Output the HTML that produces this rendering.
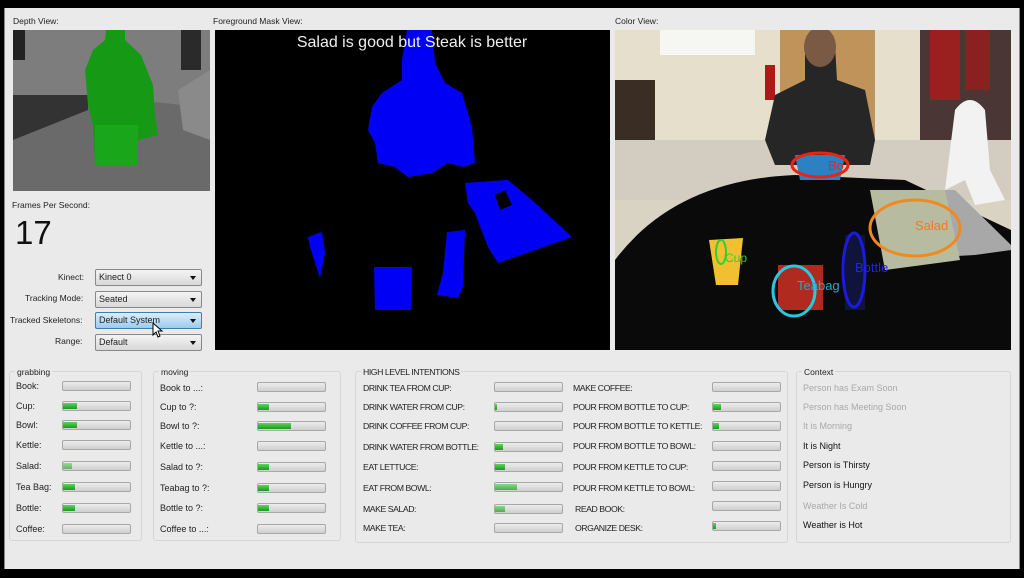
<!DOCTYPE html>
<html><head><meta charset="utf-8"><style>
*{margin:0;padding:0;box-sizing:border-box}
body{width:1024px;height:578px;background:#000;position:relative;overflow:hidden;font-family:"Liberation Sans",sans-serif;font-size:9px;color:#222}
.a{position:absolute}
.win{left:4px;top:8px;width:1016px;height:561px;background:#eaeaea;border-left:1px solid #888;border-right:1px solid #888}
.lbl{position:absolute;font-size:8.5px;color:#222;white-space:nowrap}
.cb{position:absolute;left:95px;width:107px;height:17px;border:1px solid #888;border-radius:2px;background:linear-gradient(#f4f4f4,#d8d8d8);font-size:9px;padding:2px 3px;color:#222}
.cb:after{content:"";position:absolute;right:5px;top:6px;border-left:3px solid transparent;border-right:3px solid transparent;border-top:4px solid #111}
.grp{position:absolute;border:1px solid #d6d6d6;border-radius:3px}
.gt{position:absolute;top:-5px;left:5px;background:#eaeaea;padding:0 2px;font-size:8.5px}
.bar{position:absolute;height:10px;width:69px;border:1px solid #a8a8a8;border-radius:2px;background:linear-gradient(#ececec,#cfcfcf)}
.bar i{position:absolute;left:0;top:1px;bottom:1px;background:linear-gradient(#5fd35f,#1a9a1a);display:block}
.t{position:absolute;font-size:9px;white-space:nowrap}
.h{letter-spacing:-0.45px;font-size:8.7px}
</style></head><body>
<div class="a win"></div>
<div class="lbl" style="left:13px;top:16px">Depth View:</div>
<div class="lbl" style="left:213px;top:16px">Foreground Mask View:</div>
<div class="lbl" style="left:615px;top:16px">Color View:</div>

<svg class="a" style="left:13px;top:30px" width="197" height="161" viewBox="0 0 197 161">
<rect width="197" height="161" fill="#7d7d7d"/>
<path d="M0 85 Q100 60 197 80 L197 161 L0 161Z" fill="#6a6a6a"/>
<path d="M0 65 L75 65 L75 80 L0 110Z" fill="#333"/>
<path d="M165 60 L197 40 L197 110 L170 100Z" fill="#8a8a8a"/>
<rect x="0" y="0" width="12" height="30" fill="#222"/>
<rect x="168" y="0" width="20" height="40" fill="#2a2a2a"/>
<path d="M93 0 L112 0 L112 10 L128 25 L140 55 L142 85 L145 105 L125 110 L123 135 L82 135 L80 95 L75 75 L72 40 L80 20 L92 10Z" fill="#169a16"/>
<path d="M82 95 L125 95 L125 135 L82 135Z" fill="#1aa61a"/>
</svg>

<div class="lbl" style="left:12px;top:200px">Frames Per Second:</div>
<div class="a" style="left:15px;top:214px;font-size:33px;color:#111">17</div>

<div class="lbl" style="left:58px;top:272px">Kinect:</div>
<div class="lbl" style="left:25px;top:293px">Tracking Mode:</div>
<div class="lbl" style="left:10px;top:315px">Tracked Skeletons:</div>
<div class="lbl" style="left:55px;top:336px">Range:</div>
<div class="cb" style="top:269px">Kinect 0</div>
<div class="cb" style="top:291px">Seated</div>
<div class="cb" style="top:312px;background:linear-gradient(#dceefa,#9ccbee);border-color:#3c7fb1">Default System</div>
<div class="cb" style="top:334px">Default</div>
<svg class="a" style="left:152px;top:322px" width="12" height="16"><path d="M1 1 L1 13 L4 10 L6 15 L8 14 L6 9 L10 9Z" fill="#fff" stroke="#000" stroke-width="1"/></svg>

<svg class="a" style="left:215px;top:30px" width="395" height="320" viewBox="215 30 395 320">
<rect x="215" y="30" width="395" height="320" fill="#000"/>
<g fill="#0000f5">
<polygon points="407,30 432,30 435,63 445,83 462,93 472,127 475,163 463,167 448,163 432,173 408,177 395,167 378,163 375,143 368,130 372,107 382,93 402,80 402,60"/>
<polygon points="465,183 508,180 532,200 572,237 498,263 488,247 475,213 468,203"/>
<polygon points="308,237 322,232 325,253 320,278 310,247"/>
<polygon points="374,267 412,267 411,310 375,310"/>
<polygon points="447,232 465,230 463,287 458,298 437,295 443,273"/>
</g>
<polygon points="495,195 505,190 512,205 500,210" fill="#000"/>
<text x="412" y="47" fill="#eee" font-family="Liberation Sans,sans-serif" font-size="16" text-anchor="middle">Salad is good but Steak is better</text>
</svg>

<svg class="a" style="left:615px;top:30px" width="396" height="320" viewBox="0 0 396 320">
<rect width="396" height="320" fill="#d9d3c4"/>
<rect x="0" y="0" width="396" height="110" fill="#e6dfcc"/>
<rect x="45" y="0" width="95" height="25" fill="#f6f6f3"/>
<rect x="165" y="0" width="95" height="120" fill="#c0935a"/>
<rect x="0" y="50" width="40" height="90" fill="#3a2e24"/>
<rect x="150" y="35" width="10" height="35" fill="#b01818"/>
<rect x="0" y="110" width="396" height="60" fill="#d2cdc0"/>
<rect x="305" y="0" width="91" height="110" fill="#4a3634"/>
<rect x="315" y="0" width="30" height="70" fill="#9a2020"/>
<rect x="350" y="0" width="25" height="60" fill="#8a2020"/>
<path d="M340 80 Q355 60 370 80 L375 140 L390 170 L360 175 L350 150 L330 160Z" fill="#f2f2f2"/>
<path d="M0 230 Q60 150 180 145 L290 150 L396 200 L396 320 L0 320Z" fill="#0a0a0a"/>
<path d="M260 160 L340 160 L396 215 L396 220 L360 225 L270 230Z" fill="#a8a8a8"/>
<path d="M190 15 Q205 0 220 15 L222 50 L250 60 L260 110 L255 135 L160 135 L150 110 L160 65 L190 50Z" fill="#262626"/>
<ellipse cx="205" cy="17" rx="16" ry="20" fill="#7a5a44"/>
<path d="M180 125 L230 125 L225 150 L185 150Z" fill="#2d80c4"/>
<ellipse cx="205" cy="135" rx="28" ry="12" fill="none" stroke="#e21" stroke-width="3"/>
<text x="213" y="140" fill="#e22" font-size="13" font-family="Liberation Sans,sans-serif">Bo</text>
<path d="M255 160 L330 160 L345 230 L270 240Z" fill="#b7bca0"/>
<ellipse cx="300" cy="198" rx="45" ry="28" fill="none" stroke="#f08a20" stroke-width="3"/>
<text x="300" y="200" fill="#f07a20" font-size="13" font-family="Liberation Sans,sans-serif">Salad</text>
<path d="M94 210 L128 208 L123 255 L101 255Z" fill="#f0c030"/>
<ellipse cx="106" cy="222" rx="5" ry="12" fill="none" stroke="#30d030" stroke-width="2"/>
<text x="110" y="232" fill="#3c3" font-size="12" font-family="Liberation Sans,sans-serif">Cup</text>
<rect x="163" y="235" width="45" height="45" fill="#b02a20"/>
<ellipse cx="179" cy="261" rx="21" ry="25" fill="none" stroke="#29c8e0" stroke-width="3"/>
<text x="182" y="260" fill="#2ac" font-size="13" font-family="Liberation Sans,sans-serif">Teabag</text>
<rect x="230" y="205" width="20" height="75" fill="#10143a"/>
<ellipse cx="239" cy="240" rx="11" ry="37" fill="none" stroke="#1a1ae0" stroke-width="3"/>
<text x="240" y="242" fill="#22e" font-size="13" font-family="Liberation Sans,sans-serif">Bottle</text>
</svg>

<div class="grp" style="left:9px;top:371px;width:133px;height:170px"><span class="gt">grabbing</span></div>
<div class="grp" style="left:153px;top:371px;width:188px;height:170px"><span class="gt">moving</span></div>
<div class="grp" style="left:355px;top:371px;width:433px;height:172px"><span class="gt h">HIGH LEVEL INTENTIONS</span></div>
<div class="grp" style="left:796px;top:371px;width:215px;height:172px"><span class="gt">Context</span></div>

<div class="t" style="left:16px;top:381px">Book:</div><div class="bar" style="left:62px;top:381px"></div>
<div class="t" style="left:16px;top:401px">Cup:</div><div class="bar" style="left:62px;top:401px"><i style="width:14px"></i></div>
<div class="t" style="left:16px;top:420px">Bowl:</div><div class="bar" style="left:62px;top:420px"><i style="width:14px"></i></div>
<div class="t" style="left:16px;top:440px">Kettle:</div><div class="bar" style="left:62px;top:440px"></div>
<div class="t" style="left:16px;top:461px">Salad:</div><div class="bar" style="left:62px;top:461px"><i style="width:9px;opacity:.6"></i></div>
<div class="t" style="left:16px;top:482px">Tea Bag:</div><div class="bar" style="left:62px;top:482px"><i style="width:12px"></i></div>
<div class="t" style="left:16px;top:503px">Bottle:</div><div class="bar" style="left:62px;top:503px"><i style="width:12px"></i></div>
<div class="t" style="left:16px;top:524px">Coffee:</div><div class="bar" style="left:62px;top:524px"></div>

<div class="t" style="left:160px;top:383px">Book to ...:</div><div class="bar" style="left:257px;top:382px"></div>
<div class="t" style="left:160px;top:402px">Cup to ?:</div><div class="bar" style="left:257px;top:402px"><i style="width:11px"></i></div>
<div class="t" style="left:160px;top:421px">Bowl to ?:</div><div class="bar" style="left:257px;top:421px"><i style="width:33px"></i></div>
<div class="t" style="left:160px;top:441px">Kettle to ...:</div><div class="bar" style="left:257px;top:441px"></div>
<div class="t" style="left:160px;top:462px">Salad to ?:</div><div class="bar" style="left:257px;top:462px"><i style="width:11px"></i></div>
<div class="t" style="left:160px;top:483px">Teabag to ?:</div><div class="bar" style="left:257px;top:483px"><i style="width:11px"></i></div>
<div class="t" style="left:160px;top:503px">Bottle to ?:</div><div class="bar" style="left:257px;top:503px"><i style="width:11px"></i></div>
<div class="t" style="left:160px;top:524px">Coffee to ...:</div><div class="bar" style="left:257px;top:524px"></div>

<div class="t h" style="left:363px;top:383px">DRINK TEA FROM CUP:</div><div class="bar" style="left:494px;top:382px"></div>
<div class="t h" style="left:363px;top:402px">DRINK WATER FROM CUP:</div><div class="bar" style="left:494px;top:402px"><i style="width:2px"></i></div>
<div class="t h" style="left:363px;top:421px">DRINK COFFEE FROM CUP:</div><div class="bar" style="left:494px;top:421px"></div>
<div class="t h" style="left:363px;top:442px">DRINK WATER FROM BOTTLE:</div><div class="bar" style="left:494px;top:442px"><i style="width:8px"></i></div>
<div class="t h" style="left:363px;top:462px">EAT LETTUCE:</div><div class="bar" style="left:494px;top:462px"><i style="width:10px"></i></div>
<div class="t h" style="left:363px;top:483px">EAT FROM BOWL:</div><div class="bar" style="left:494px;top:482px"><i style="width:22px;opacity:.7"></i></div>
<div class="t h" style="left:363px;top:504px">MAKE SALAD:</div><div class="bar" style="left:494px;top:504px"><i style="width:10px;opacity:.7"></i></div>
<div class="t h" style="left:363px;top:523px">MAKE TEA:</div><div class="bar" style="left:494px;top:523px"></div>

<div class="t h" style="left:573px;top:383px">MAKE COFFEE:</div><div class="bar" style="left:712px;top:382px"></div>
<div class="t h" style="left:573px;top:402px">POUR FROM BOTTLE TO CUP:</div><div class="bar" style="left:712px;top:402px"><i style="width:8px"></i></div>
<div class="t h" style="left:573px;top:421px">POUR FROM BOTTLE TO KETTLE:</div><div class="bar" style="left:712px;top:421px"><i style="width:6px"></i></div>
<div class="t h" style="left:573px;top:441px">POUR FROM BOTTLE TO BOWL:</div><div class="bar" style="left:712px;top:441px"></div>
<div class="t h" style="left:573px;top:462px">POUR FROM KETTLE TO CUP:</div><div class="bar" style="left:712px;top:461px"></div>
<div class="t h" style="left:573px;top:483px">POUR FROM KETTLE TO BOWL:</div><div class="bar" style="left:712px;top:481px"></div>
<div class="t h" style="left:575px;top:504px">READ BOOK:</div><div class="bar" style="left:712px;top:501px"></div>
<div class="t h" style="left:575px;top:523px">ORGANIZE DESK:</div><div class="bar" style="left:712px;top:521px"><i style="width:3px"></i></div>

<div class="t" style="left:803px;top:383px;color:#a8a8a8">Person has Exam Soon</div>
<div class="t" style="left:803px;top:402px;color:#a8a8a8">Person has Meeting Soon</div>
<div class="t" style="left:803px;top:421px;color:#a8a8a8">It is Morning</div>
<div class="t" style="left:803px;top:441px;color:#111">It is Night</div>
<div class="t" style="left:803px;top:460px;color:#111">Person is Thirsty</div>
<div class="t" style="left:803px;top:480px;color:#111">Person is Hungry</div>
<div class="t" style="left:803px;top:501px;color:#a8a8a8">Weather Is Cold</div>
<div class="t" style="left:803px;top:520px;color:#111">Weather is Hot</div>
</body></html>
